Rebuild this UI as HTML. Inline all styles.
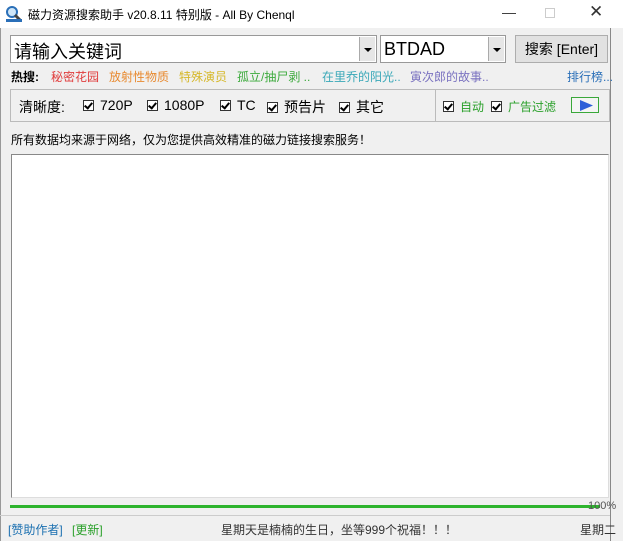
<!DOCTYPE html>
<html><head><meta charset="utf-8"><style>
*{margin:0;padding:0;box-sizing:border-box}
body{width:623px;height:541px;overflow:hidden;background:#f0f0f0;font-family:"Liberation Sans","Noto Sans CJK SC",sans-serif;font-size:12px;color:#000;position:relative}
.a{position:absolute;white-space:nowrap}
.cb{display:inline-block;width:11px;height:11px;border:1px solid #333;background:#fff;position:relative;vertical-align:-1px;margin-right:6px}
.cb:after{content:"";position:absolute;left:2px;top:0px;width:3px;height:6px;border:solid #000;border-width:0 2px 2px 0;transform:rotate(40deg)}
.dd{position:absolute;top:1px;bottom:1px;width:16px;background:#e6e6e6;border-left:1px solid #aaa}
.dd:after{content:"";position:absolute;left:4px;top:11px;border:4px solid transparent;border-top:4px solid #000;border-bottom:0}
</style></head><body>
<div class="a" style="left:0;top:0;width:623px;height:28px;background:#fff"></div>
<svg class="a" style="left:5px;top:5px" width="18" height="18" viewBox="0 0 18 18"><circle cx="7" cy="7" r="5" fill="#cfe6f8" stroke="#2a6fb8" stroke-width="2"/><path d="M10 10l5 5" stroke="#444" stroke-width="3"/><rect x="1" y="14" width="16" height="3" fill="#2a6fb8"/></svg>
<div class="a" style="left:28px;top:6px;font-size:12px">磁力资源搜索助手 v20.8.11 特别版 - All By Chenql</div>
<div class="a" style="left:502px;top:4px;font-size:14px;color:#333">—</div>
<div class="a" style="left:545px;top:8px;width:10px;height:10px;border:1px solid #ccc"></div>
<div class="a" style="left:589px;top:2px;font-size:17px;color:#333">✕</div>
<div class="a" style="left:610px;top:28px;width:1px;height:513px;background:#888"></div>
<div class="a" style="left:0;top:28px;width:1px;height:513px;background:#999"></div>

<div class="a" style="left:10px;top:35px;width:367px;height:28px;background:#fff;border:1px solid #999"><span class="a" style="left:3px;top:2px;font-size:18px">请输入关键词</span><div class="dd" style="right:1px"></div></div>
<div class="a" style="left:380px;top:35px;width:126px;height:28px;background:#fff;border:1px solid #999"><span class="a" style="left:3px;top:3px;font-size:18px">BTDAD</span><div class="dd" style="right:1px"></div></div>
<div class="a" style="left:515px;top:35px;width:93px;height:28px;background:#e1e1e1;border:1px solid #adadad;font-size:14px;text-align:center;line-height:26px">搜索 [Enter]</div>

<div class="a" style="left:11px;top:68px;font-weight:bold">热搜:</div>
<div class="a" style="left:51px;top:68px;color:#e03c3c">秘密花园</div>
<div class="a" style="left:109px;top:68px;color:#e88a30">放射性物质</div>
<div class="a" style="left:179px;top:68px;color:#d6b82a">特殊演员</div>
<div class="a" style="left:237px;top:68px;color:#3caa3c">孤立/抽尸剥 ..</div>
<div class="a" style="left:322px;top:68px;color:#3aa8b8">在里乔的阳光..</div>
<div class="a" style="left:410px;top:68px;color:#7a72c0">寅次郎的故事..</div>
<div class="a" style="left:567px;top:68px;color:#2a6fb8">排行榜...</div>

<div class="a" style="left:10px;top:89px;width:600px;height:33px;border:1px solid #bbb"></div>
<div class="a" style="left:435px;top:89px;width:1px;height:33px;background:#bbb"></div>
<div class="a" style="left:19px;top:97px;font-size:14px">清晰度:</div>
<div class="a" style="left:83px;top:97px;font-size:14px"><span class="cb"></span>720P</div>
<div class="a" style="left:147px;top:97px;font-size:14px"><span class="cb"></span>1080P</div>
<div class="a" style="left:220px;top:97px;font-size:14px"><span class="cb"></span>TC</div>
<div class="a" style="left:267px;top:97px;font-size:14px"><span class="cb"></span>预告片</div>
<div class="a" style="left:339px;top:97px;font-size:14px"><span class="cb"></span>其它</div>
<div class="a" style="left:443px;top:98px;color:#2aa02a"><span class="cb"></span>自动</div>
<div class="a" style="left:491px;top:98px;color:#2aa02a"><span class="cb"></span>广告过滤</div>
<div class="a" style="left:571px;top:97px;width:28px;height:16px;border:1px solid #3aa83a;background:#f4f4f4"><svg class="a" style="left:8px;top:2px" width="13" height="11"><path d="M0 0L13 5.5L0 11Z" fill="#2e5fd8"/></svg></div>

<div class="a" style="left:11px;top:131px">所有数据均来源于网络，仅为您提供高效精准的磁力链接搜索服务！</div>
<div class="a" style="left:11px;top:154px;width:598px;height:344px;background:#fff;border:1px solid #888;border-right-color:#ddd;border-bottom-color:#ddd"></div>
<div class="a" style="left:10px;top:505px;width:590px;height:3px;background:#2db42d"></div>
<div class="a" style="left:588px;top:500px;font-size:11px;color:#555">100%</div>
<div class="a" style="left:0;top:515px;width:610px;height:1px;background:#ccc"></div>
<div class="a" style="left:8px;top:521px;color:#1a6fb0">[赞助作者]</div>
<div class="a" style="left:72px;top:521px;color:#2aa02a">[更新]</div>
<div class="a" style="left:221px;top:521px;color:#333">星期天是楠楠的生日，坐等999个祝福！！！</div>
<div class="a" style="left:580px;top:521px;color:#333">星期二</div>
</body></html>
